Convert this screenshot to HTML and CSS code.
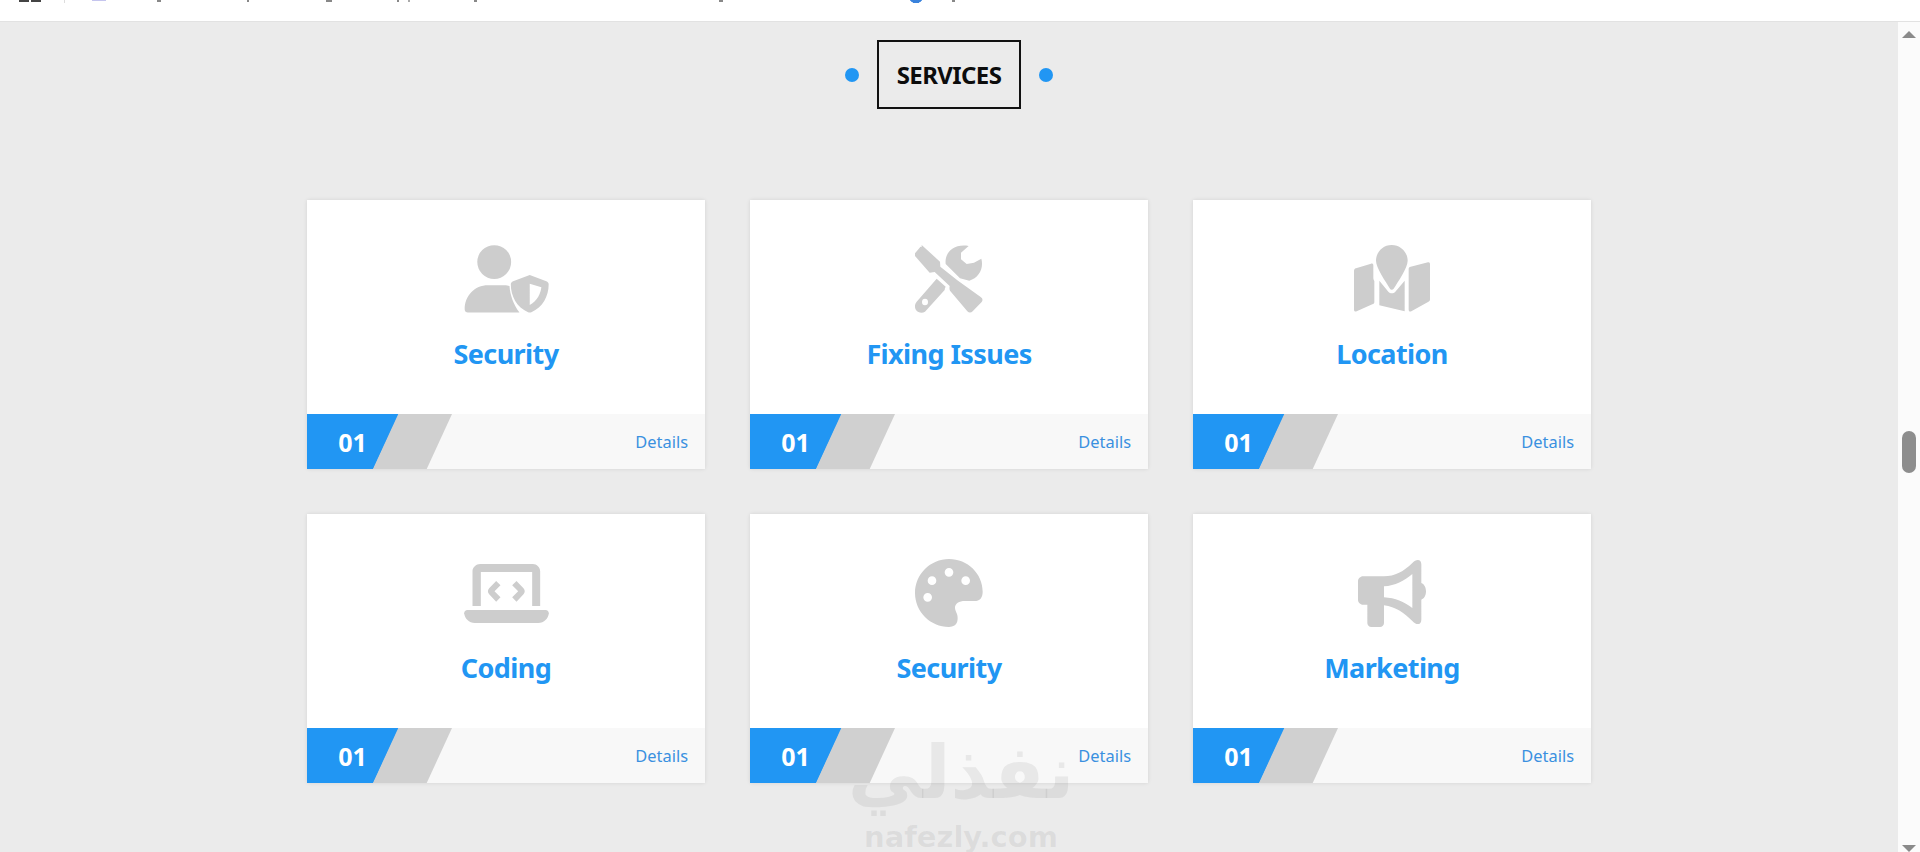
FILE: index.html
```html
<!DOCTYPE html>
<html lang="en">
<head>
<meta charset="utf-8">
<title>Services</title>
<link rel="stylesheet" href="styles.css">
</head>
<body>
<header class="topbar"></header>
<div class="frame">
  <main class="content">
    <div class="heading">
      <span class="dot"></span>
      <h2 class="heading-box">SERVICES</h2>
      <span class="dot"></span>
    </div>
    <section class="grid">
      <article class="card">
        <div class="card-body">
          <svg class="icon" viewBox="490 165 256 204" width="85" height="68"><circle cx="581" cy="216" r="51"/><path d="M492 358c0-40 30-72 70-72h50c6 0 10 1 15 2 2 28 12 55 30 80H502c-6 0-10-4-10-10z"/><path fill-rule="evenodd" d="M688 255l50 19c4 2 7 5 7 9 0 36-18 70-52 84-3 1-7 1-10 0-34-14-52-48-52-84 0-4 3-7 7-9zm0 26v64c24-12 33-36 35-53z"/></svg>
          <h3 class="title">Security</h3>
        </div>
        <div class="card-foot"><span class="num">01</span><span class="slant"></span><a class="details">Details</a></div>
      </article>
      <article class="card">
        <div class="card-body">
          <svg class="icon" viewBox="105 75 204 204" width="68" height="68"><path d="M125 75l55 50 1 15 51 41 70 50c6 4 7 10 3 15l-27 28c-5 5-11 5-16 0l-52-62c-2-3-2-8-1-14l-45-42-15 2-44-50c-2-3-2-6 0-8l14-17c2-3 4-3 6-1z"/><path d="M266 78l-23 20v20l17 14 22-4 22-12c8 30-8 58-36 66l-28-7-43-43c-4-32 22-62 69-54z"/><path fill-rule="evenodd" d="M170 176l27 24c-2 3-3 6-3 10l-59 65c-9 6-21 3-27-5-5-8-4-18 2-25zm-35 60a9 10 0 1 0 0 20 9 10 0 1 0 0-20z"/></svg>
          <h3 class="title">Fixing Issues</h3>
        </div>
        <div class="card-foot"><span class="num">01</span><span class="slant"></span><a class="details">Details</a></div>
      </article>
      <article class="card">
        <div class="card-body">
          <svg class="icon" viewBox="100 75 228 204" width="76" height="68"><path d="M213 75c-27 0-47 22-47 47 0 22 30 64 42 84 2 4 8 4 11 0 12-20 42-62 42-84 0-25-21-47-48-47z"/><path d="M151 131c4-1 7 1 7 5v36c0 5 1 8 3 11v63c0 4-2 6-6 7l-47 21c-5 2-8-1-8-5V153c0-4 2-7 6-8z"/><path d="M176 182l27 33c6 6 15 6 21 0l28-33v92l-76-18z"/><path d="M322 127c4-1 6 2 6 6v105c0 4-2 7-6 8l-50 28c-4 2-8 0-8-5V147c0-4 2-6 6-7z"/></svg>
          <h3 class="title">Location</h3>
        </div>
        <div class="card-foot"><span class="num">01</span><span class="slant"></span><a class="details">Details</a></div>
      </article>
      <article class="card">
        <div class="card-body">
          <div class="icon-slot">
            <svg class="icon" viewBox="72 57 254 177" width="85" height="59"><path d="M120 57h158c12 0 22 10 22 22v104h-24V81H122v102H97V79c0-12 11-22 23-22z"/><path d="M82 195h234c6 0 10 4 10 10-2 16-14 29-32 29H104c-18 0-30-13-32-29 0-6 4-10 10-10z"/><path d="M168 108l13 13-18 18 18 18-13 13-21-22c-5-5-5-13 0-18z"/><path d="M229 108l-13 13 18 18-18 18 13 13 21-22c5-5 5-13 0-18z"/></svg>
          </div>
          <h3 class="title">Coding</h3>
        </div>
        <div class="card-foot"><span class="num">01</span><span class="slant"></span><a class="details">Details</a></div>
      </article>
      <article class="card">
        <div class="card-body">
          <svg class="icon" viewBox="105 43 204 204" width="68" height="68"><path fill-rule="evenodd" d="M207 43c56 0 101 44 101 98 0 18-8 28-25 28h-28c-18 0-30 8-30 20 0 6 3 11 5 17 3 7 4 14 2 24-3 11-12 17-25 17-56 0-102-46-102-102S151 43 207 43zm0 27a13 13 0 1 0 0 26 13 13 0 1 0 0-26zm-51 25a13 13 0 1 0 0 26 13 13 0 1 0 0-26zm101 0a13 13 0 1 0 0 26 13 13 0 1 0 0-26zm-114 50a13 13 0 1 0 0 26 13 13 0 1 0 0-26z"/></svg>
          <h3 class="title">Security</h3>
        </div>
        <div class="card-foot"><span class="num">01</span><span class="slant"></span><a class="details">Details</a></div>
      </article>
      <article class="card">
        <div class="card-body">
          <svg class="icon" viewBox="112 43 204 204" width="68" height="68"><path fill-rule="evenodd" d="M190 95c32 0 60-15 85-40 10-12 27-14 27 4v56c8 3 14 12 14 25s-6 22-14 25v60c0 18-17 16-27 4-25-25-50-42-85-47v53c0 6-5 12-12 12h-26c-7 0-12-6-12-12v-55h-13c-8 0-15-7-15-15v-55c0-8 7-15 15-15zm0 30v33c34 2 60 14 85 32V88c-25 20-51 35-85 37z"/></svg>
          <h3 class="title">Marketing</h3>
        </div>
        <div class="card-foot"><span class="num">01</span><span class="slant"></span><a class="details">Details</a></div>
      </article>
    </section>
  </main>
  <aside class="scrollbar">
    <span class="arrow arrow-up"></span>
    <span class="thumb"></span>
    <span class="arrow arrow-down"></span>
  </aside>
</div>
<div class="watermark" aria-hidden="true">
  <span class="wm-ar" lang="ar" dir="rtl">نفذلي</span>
  <span class="wm-en">nafezly.com</span>
</div>
</body>
</html>
```
FILE: styles.css
```css
* { box-sizing: border-box; }
html, body { margin: 0; height: 852px; overflow: hidden; }
body {
  display: flex;
  flex-direction: column;
  background: #ebebeb;
  font-family: "Noto Sans", "Open Sans", sans-serif;
  position: relative;
}
.topbar {
  height: 22px;
  flex: none;
  border-bottom: 1px solid #e2e2e2;
  background:
    linear-gradient(#444, #444) no-repeat 19px 0 / 10px 2px,
    linear-gradient(#444, #444) no-repeat 31px 0 / 10px 2px,
    linear-gradient(#ddd, #ddd) no-repeat 64px 0 / 1px 3px,
    linear-gradient(#c5c5ee, #c5c5ee) no-repeat 92px 0 / 14px 1px,
    linear-gradient(#888, #888) no-repeat 157px 0 / 4px 2px,
    linear-gradient(#888, #888) no-repeat 247px 0 / 2px 2px,
    linear-gradient(#888, #888) no-repeat 326px 0 / 6px 2px,
    linear-gradient(#888, #888) no-repeat 397px 0 / 2px 2px,
    linear-gradient(#aaa, #aaa) no-repeat 408px 0 / 2px 2px,
    linear-gradient(#888, #888) no-repeat 474px 0 / 3px 2px,
    linear-gradient(#888, #888) no-repeat 719px 0 / 4px 2px,
    radial-gradient(circle at 7px -4px, #3a82dc 7px, transparent 7.5px) no-repeat 909px 0 / 14px 4px,
    linear-gradient(#888, #888) no-repeat 952px 0 / 3px 2px,
    #fff;
}
.frame { flex: 1; display: flex; min-height: 0; }
.content { flex: 1; min-width: 0; display: flex; flex-direction: column; align-items: center; padding-top: 18px; }
.heading { display: flex; align-items: center; gap: 18px; }
.dot { width: 14px; height: 14px; border-radius: 50%; background: #2196f3; }
.heading-box {
  margin: 0;
  width: 144px;
  height: 69px;
  border: 2px solid #111;
  display: flex;
  align-items: center;
  justify-content: center;
  font-size: 24px;
  font-weight: 700;
  letter-spacing: -0.6px;
  color: #0c0c0c;
}
.grid {
  margin-top: 91px;
  display: grid;
  grid-template-columns: repeat(3, 398px);
  column-gap: 45px;
  row-gap: 45px;
}
.card {
  height: 269px;
  background: #fff;
  box-shadow: 0 0 4px rgba(0,0,0,.1);
  display: flex;
  flex-direction: column;
}
.card-body { flex: 1; display: flex; flex-direction: column; align-items: center; padding-top: 45px; }
.icon { display: block; fill: #cdcdcd; flex: none; }
.icon-slot { height: 68px; display: flex; align-items: flex-end; padding-bottom: 4px; }
.title {
  margin: 19px 0 0;
  font-size: 27px;
  line-height: 44px;
  font-weight: 700;
  letter-spacing: -0.6px;
  color: #2196f3;
}
.card-foot { height: 55px; flex: none; display: flex; align-items: center; background: #f8f8f8; }
.num {
  width: 92px;
  height: 100%;
  padding-right: 1px;
  display: flex;
  align-items: center;
  justify-content: center;
  background: #2196f3;
  color: #fff;
  font-size: 25px;
  font-weight: 700;
  clip-path: polygon(0 0, 100% 0, 72.2% 100%, 0 100%);
}
.slant {
  width: 79px;
  height: 100%;
  margin-left: -26px;
  background: #d0d0d0;
  clip-path: polygon(32% 0, 100% 0, 68% 100%, 0 100%);
}
.details { margin-left: auto; padding-right: 17px; font-size: 16.4px; color: #3a90e0; }
.scrollbar { width: 22px; flex: none; background: #fbfbfb; position: relative; }
.arrow { position: absolute; left: 4px; width: 0; height: 0; border-left: 7px solid transparent; border-right: 7px solid transparent; }
.arrow-up { top: 9px; border-bottom: 7px solid #8a8a8a; }
.arrow-down { bottom: 0; border-top: 7px solid #8a8a8a; }
.thumb { position: absolute; top: 409px; left: 4px; width: 14px; height: 42px; border-radius: 7px; background: #8d8d8d; }
.watermark {
  position: absolute;
  left: 851px;
  top: 724px;
  width: 220px;
  display: flex;
  flex-direction: column;
  align-items: center;
  color: rgba(120,120,120,.13);
  pointer-events: none;
}
.wm-ar { font-family: "DejaVu Sans", sans-serif; font-weight: 700; font-size: 74px; line-height: 96px; }
.wm-en { font-family: "DejaVu Sans", sans-serif; font-weight: 700; font-size: 29px; line-height: 34px; }
```
